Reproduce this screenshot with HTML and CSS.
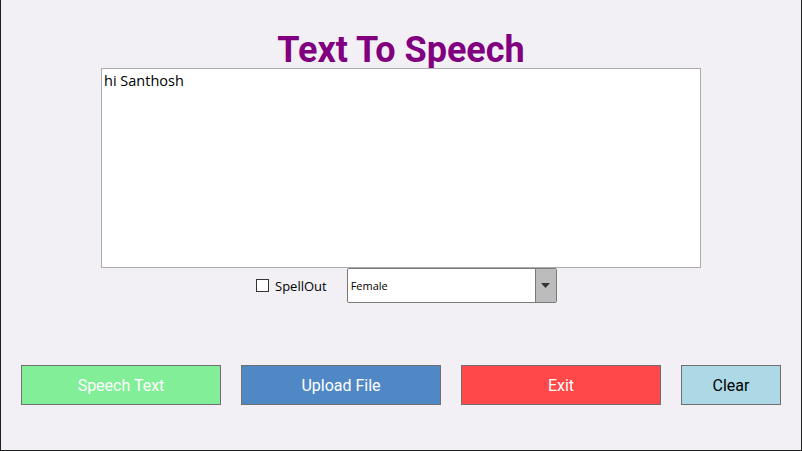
FILE: index.html
```html
<!DOCTYPE html>
<html>
<head>
<meta charset="utf-8">
<link rel="stylesheet" href="styles.css">
</head>
<body>
<div class="window">
  <h1 class="title">Text To Speech</h1>
  <div class="editor">hi Santhosh</div>
  <div class="options">
    <label class="spell"><span class="check"></span><span class="spell-label">SpellOut</span></label>
    <div class="combo">
      <span class="combo-value">Female</span>
      <span class="combo-btn"><svg width="9" height="5" viewBox="0 0 9 5"><path d="M0 0H9L4.5 5Z" fill="#333"/></svg></span>
    </div>
  </div>
  <div class="buttons">
    <div class="btn btn-green">Speech Text</div>
    <div class="btn btn-blue">Upload File</div>
    <div class="btn btn-red">Exit</div>
    <div class="btn btn-light">Clear</div>
  </div>
</div>
</body>
</html>
```
FILE: styles.css
```css
html, body {
  margin: 0;
  padding: 0;
}
body {
  width: 802px;
  height: 451px;
  overflow: hidden;
  background: #f2f0f5;
}
.window {
  box-sizing: border-box;
  width: 802px;
  height: 451px;
  background: #f2f0f5;
  border: 1px solid #1f1f1f;
  border-top: none;
  display: flex;
  flex-direction: column;
}
.title {
  margin: 32px 0 0 0;
  height: 36px;
  line-height: 36px;
  text-align: center;
  font-family: Roboto, sans-serif;
  font-weight: 700;
  font-size: 36px;
  color: #800080;
}
.editor {
  box-sizing: border-box;
  margin-left: 100px;
  width: 600px;
  height: 200px;
  background: #fff;
  border: 1px solid #aaaaaa;
  padding: 2px 2px;
  font-family: "Open Sans", sans-serif;
  font-size: 14.5px;
  line-height: 20px;
  color: #000;
}
.options {
  display: flex;
  align-items: center;
  height: 35px;
  padding-left: 255px;
}
.spell {
  display: flex;
  align-items: center;
  margin-right: 20px;
}
.check {
  box-sizing: border-box;
  width: 13px;
  height: 13px;
  border: 1px solid #333;
  background: #fff;
  margin-right: 6px;
}
.spell-label {
  font-family: "Open Sans", sans-serif;
  font-size: 13px;
  color: #000;
}
.combo {
  box-sizing: border-box;
  width: 210px;
  height: 35px;
  border: 1px solid #7a7a7a;
  border-radius: 2px;
  background: #fff;
  display: flex;
  align-items: stretch;
}
.combo-value {
  flex: 1;
  display: flex;
  align-items: center;
  padding-left: 3px;
  font-family: "Open Sans", sans-serif;
  font-size: 11px;
  color: #000;
}
.combo-btn {
  width: 20px;
  background: #bcbcbc;
  border-left: 1px solid #7a7a7a;
  display: flex;
  align-items: center;
  justify-content: center;
}
.buttons {
  display: flex;
  gap: 20px;
  padding-left: 20px;
  margin-top: 62px;
}
.btn {
  box-sizing: border-box;
  width: 200px;
  height: 40px;
  border: 1px solid #707070;
  display: flex;
  align-items: center;
  justify-content: center;
  font-family: Roboto, sans-serif;
  font-size: 16px;
  color: #fff;
}
.btn-green { background: #82ef98; }
.btn-blue { background: #5088c6; }
.btn-red { background: #ff4849; }
.btn-light { background: #add8e6; color: #000; width: 100px; }
```
